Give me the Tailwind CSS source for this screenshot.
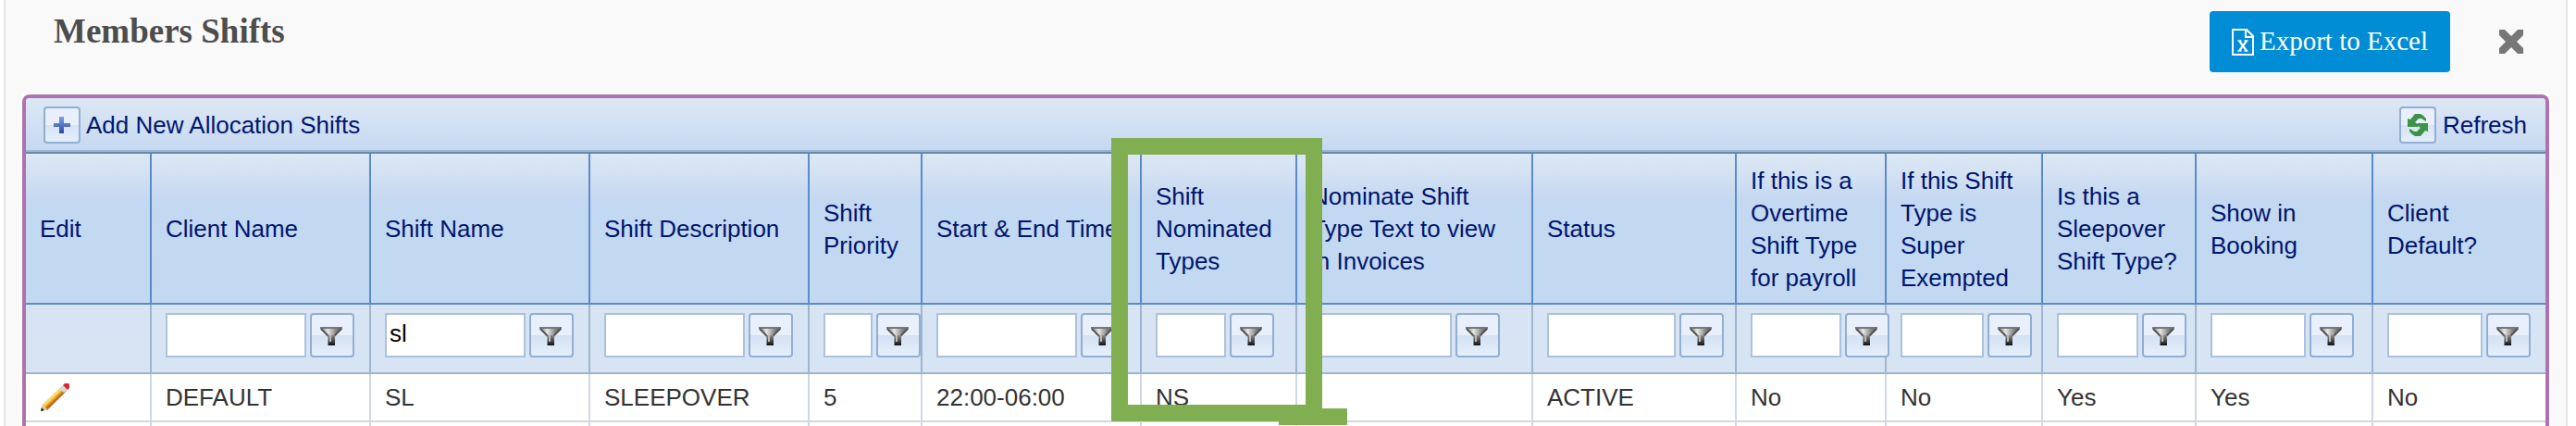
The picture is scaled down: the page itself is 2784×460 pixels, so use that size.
<!DOCTYPE html>
<html lang="en">
<head>
    <meta charset="UTF-8">
    <meta name="viewport" content="width=device-width, initial-scale=1.0">
    <title>Members Shifts</title>
    <script src="https://cdn.jsdelivr.net/npm/@tailwindcss/browser@4"></script>
</head>
<body class="bg-white font-['Liberation_Sans',Arial,sans-serif]">
    <!-- Shared icons -->
    <svg class="absolute size-0">
        <defs>
            <linearGradient id="metal" x1="0" y1="0" x2="1" y2="0">
                <stop offset="0" stop-color="#777"/>
                <stop offset="0.35" stop-color="#e6e6e6"/>
                <stop offset="0.7" stop-color="#8a8a8a"/>
                <stop offset="1" stop-color="#4a4a4a"/>
            </linearGradient>
            <linearGradient id="stem" x1="0" y1="0" x2="0" y2="1">
                <stop offset="0" stop-color="#8a8a8a"/>
                <stop offset="1" stop-color="#111"/>
            </linearGradient>
            <linearGradient id="plus" x1="0" y1="0" x2="0" y2="1">
                <stop offset="0" stop-color="#7f9fe8"/>
                <stop offset="1" stop-color="#2b4a9c"/>
            </linearGradient>
            <linearGradient id="face" x1="0" y1="0" x2="0" y2="1">
                <stop offset="0.5" stop-color="#e9f0fc"/>
                <stop offset="0.5" stop-color="#d6e3f4"/>
                <stop offset="1" stop-color="#e6effb"/>
            </linearGradient>
            <symbol id="funnel" viewBox="0 0 48 48">
                <path d="M11 15H35V17L27 25H19L11 17Z" fill="url(#metal)"/>
                <path d="M11 15H35V17H11Z" fill="#777"/>
                <path d="M12 17L20 25M34 17L26 25" fill="none" stroke="#555" stroke-width="2"/>
                <path d="M19.500 24H27V35H19.500Z" fill="url(#stem)"/>
                <path d="M21 24H23V31H21Z" fill="#bbb"/>
            </symbol>
        </defs>
    </svg>

    <div class="relative ml-1 mr-[9px] h-screen overflow-hidden border-x-2 border-[#e5e5e5] bg-[#f9f9f9]">
        <!-- Title bar -->
        <div class="flex h-[100px] items-start justify-between pl-[52px] pr-[46px] font-['Liberation_Serif','Times_New_Roman',serif]">
            <h1 class="pt-3 text-[37px] leading-[44px] font-bold text-[#4d4d4d]">Members Shifts</h1>
            <div class="flex items-center gap-[53px] pt-3">
                <button type="button" class="flex h-[66px] items-center gap-1.5 rounded bg-[#008dd5] px-6 text-[29px] text-white">
                    <svg class="h-[29px] w-6" viewBox="0 0 24 29" fill="none" stroke="#fff" stroke-width="2">
                        <path d="M1 1H16L23 8V28H1Z"/>
                        <path d="M15 1V9H23"/>
                        <path d="M8 13L16 24M16 13L8 24" stroke-width="2.2"/>
                        <path d="M6.500 13H10.500M13.500 13H17.500M6.500 24H10.500M13.500 24H17.500" stroke-width="1.6"/>
                    </svg>
                    Export to Excel
                </button>
                <button type="button" aria-label="Close">
                    <svg class="size-[26px]" viewBox="0 0 26 26">
                        <path d="M0 0H6L13 7L20 0H26V6L19 13L26 20V26H20L13 19L6 26H0V20L7 13L0 6Z" fill="#777"/>
                    </svg>
                </button>
            </div>
        </div>

        <!-- Grid -->
        <div class="mx-4 rounded-t-lg border-x-2 border-t-2 border-white bg-white">
            <div class="overflow-hidden rounded-t-lg border-x-4 border-t-4 border-[#ae72ae]">
                <div class="flex h-[60px] items-center justify-between border-b-2 border-[#6489ad] bg-linear-to-b from-[#dde8f5] to-[#c5d8f1] pl-[19px] pr-5 text-[26px] text-[#00156e] shadow-[inset_0_-2px_0_#9cb6cf]">
                    <button type="button" class="flex items-center gap-1.5">
                        <svg class="size-10" viewBox="0 0 40 40">
                            <rect x="1" y="1" width="38" height="38" rx="3" fill="url(#face)" stroke="#92aed2" stroke-width="2"/>
                            <path d="M17 11H22V18H29V22H22V29H17V22H11V18H17Z" fill="url(#plus)"/>
                        </svg>
                        Add New Allocation Shifts
                    </button>
                    <button type="button" class="flex items-center gap-[7px]">
                        <svg class="size-10" viewBox="0 0 40 40">
                            <rect x="1" y="1" width="38" height="38" rx="3" fill="url(#face)" stroke="#92aed2" stroke-width="2"/>
                            <g fill="#3c9447">
                                <path d="M29 13V16L27 15L24 13L21 13L17 17L20 19V22H9V13L12 14L17 8H23L26 10Z"/>
                                <path d="M29 13V16L27 15L24 13L21 13L17 17L20 19V22H9V13L12 14L17 8H23L26 10Z" transform="rotate(180 20 20)"/>
                            </g>
                        </svg>
                        Refresh
                    </button>
                </div>

                <table class="w-full table-fixed border-separate border-spacing-0 text-left text-[26px] leading-[35px]">
                    <colgroup>
                        <col class="w-[136px]">
                        <col class="w-[237px]">
                        <col class="w-[237px]">
                        <col class="w-[237px]">
                        <col class="w-[122px]">
                        <col class="w-[237px]">
                        <col class="w-[168px]">
                        <col class="w-[255px]">
                        <col class="w-[220px]">
                        <col class="w-[162px]">
                        <col class="w-[169px]">
                        <col class="w-[166px]">
                        <col class="w-[191px]">
                        <col class="w-[187px]">
                    </colgroup>
                    <thead>
                        <tr class="h-[163px] bg-linear-[to_bottom,#dde8f4_0px,#c5d8f1_50px,#c3d8f1_60px] text-[#00156e] [&>th]:border-b-2 [&>th]:border-r-2 [&>th]:border-[#5a8bcb] [&>th]:pt-0.5 [&>th]:pr-3.5 [&>th]:pl-[15px] [&>th]:font-normal [&>th:last-child]:border-r-0">
                            <th scope="col">Edit</th>
                            <th scope="col">Client Name</th>
                            <th scope="col">Shift Name</th>
                            <th scope="col" class="whitespace-nowrap">Shift Description</th>
                            <th scope="col">Shift Priority</th>
                            <th scope="col" class="whitespace-nowrap">Start &amp; End Time</th>
                            <th scope="col">Shift Nominated Types</th>
                            <th scope="col">Nominate Shift<br>Type Text to view<br>in Invoices</th>
                            <th scope="col">Status</th>
                            <th scope="col">If this is a Overtime Shift Type for payroll</th>
                            <th scope="col">If this Shift Type is Super Exempted</th>
                            <th scope="col">Is this a Sleepover Shift Type?</th>
                            <th scope="col">Show in Booking</th>
                            <th scope="col">Client<br>Default?</th>
                        </tr>
                        <tr id="filters" class="h-[75px] bg-[#d7e4f4] [&>td]:border-b-2 [&>td]:border-r-2 [&>td]:border-[#9fb4d0] [&>td]:pt-[9px] [&>td]:pl-[15px] [&>td]:align-top [&>td:last-child]:border-r-0">
                            <td></td>
                        </tr>
                    </thead>
                    <tbody class="bg-white text-[#333] [&_td]:border-b-2 [&_td]:border-r-2 [&_td]:border-[#d0d7e5] [&_td]:pl-[15px] [&_td:last-child]:border-r-0">
                        <tr class="h-[52px]">
                            <td>
                                <button type="button" aria-label="Edit" class="block">
                                    <svg class="size-8" viewBox="0 0 32 32">
                                        <path d="M1 31L3 24L24 4L29 9L8 29Z" fill="#e9a227"/>
                                        <path d="M3 24L24 4L26 6L5 26Z" fill="#f8dc6c"/>
                                        <path d="M6 28L27 8L29 9L8 30Z" fill="#b86a14"/>
                                        <path d="M1 31L3 24L8 29Z" fill="#ecc9a0"/>
                                        <path d="M1 31L2 27L5 30Z" fill="#222"/>
                                        <path d="M21 7L25 3L30 8L26 11Z" fill="#d5d8de"/>
                                        <path d="M25 3L27 1H31L32 2V6L30 8Z" fill="#d8292f"/>
                                    </svg>
                                </button>
                            </td>
                            <td>DEFAULT</td>
                            <td>SL</td>
                            <td>SLEEPOVER</td>
                            <td>5</td>
                            <td>22:00-06:00</td>
                            <td>NS</td>
                            <td></td>
                            <td>ACTIVE</td>
                            <td>No</td>
                            <td>No</td>
                            <td>Yes</td>
                            <td>Yes</td>
                            <td>No</td>
                        </tr>
                        <tr class="h-[52px]">
                            <td></td><td></td><td></td><td></td><td></td><td></td><td></td>
                            <td></td><td></td><td></td><td></td><td></td><td></td><td></td>
                        </tr>
                    </tbody>
                </table>
            </div>
        </div>

        <!-- Highlight around the nominated types column -->
        <div class="pointer-events-none absolute left-[1195px] top-[149px] z-10 h-[306px] w-[228px] border-[18px] border-[#82ae52]"></div>
        <div class="pointer-events-none absolute left-[1376px] top-[441px] z-10 h-[18px] w-[74px] bg-[#82ae52]"></div>
    </div>

    <script>
        // One filter cell per column after Edit
        const filters = [
            { label: 'Client Name', width: 152, value: '' },
            { label: 'Shift Name', width: 152, value: 'sl' },
            { label: 'Shift Description', width: 152, value: '' },
            { label: 'Shift Priority', width: 53, value: '' },
            { label: 'Start & End Time', width: 152, value: '' },
            { label: 'Shift Nominated Types', width: 76, value: '' },
            { label: 'Nominate Shift Type Text', width: 152, value: '' },
            { label: 'Status', width: 139, value: '' },
            { label: 'Overtime Shift Type', width: 98, value: '' },
            { label: 'Super Exempted', width: 90, value: '' },
            { label: 'Sleepover Shift Type', width: 88, value: '' },
            { label: 'Show in Booking', width: 103, value: '' },
            { label: 'Client Default', width: 103, value: '' }
        ];

        document.getElementById('filters').insertAdjacentHTML('beforeend', filters.map(filter => `
            <td>
                <div class="relative flex gap-1">
                    <input type="text" aria-label="Filter ${filter.label}" value="${filter.value}" style="width: ${filter.width}px"
                        class="h-12 shrink-0 border-2 border-[#abc1de] bg-white px-[3px] pb-1 text-[26px] text-black">
                    <button type="button" aria-label="Apply ${filter.label} filter"
                        class="size-12 shrink-0 rounded border-2 border-[#92aed2] bg-linear-[to_bottom,#e9f0fc_50%,#d3e1f3_50%,#e6effb]">
                        <svg class="-m-0.5 size-12"><use href="#funnel"/></svg>
                    </button>
                </div>
            </td>
        `).join(''));
    </script>
</body>
</html>
